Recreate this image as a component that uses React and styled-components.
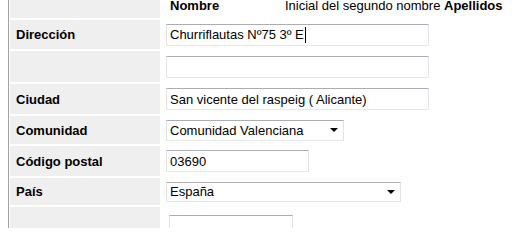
import React from "react";
import styled, { createGlobalStyle } from "styled-components";

const GlobalStyle = createGlobalStyle`
  html, body {
    margin: 0;
    padding: 0;
    background: #ffffff;
  }
  body {
    font-family: "Liberation Sans", Arial, sans-serif;
    font-size: 13px;
    color: #000;
  }
`;

const Page = styled.div`
  margin-left: 8px;
  border-left: 1px solid #a0a0a0;
  padding-left: 1px;
  height: 228px;
  overflow: hidden;
`;

const Form = styled.div`
  display: grid;
  grid-template-columns: 150px 1fr;
  column-gap: 2px;
  row-gap: 2px;
`;

const Label = styled.div`
  background: #efefef;
  height: ${(p) => p.$h}px;
  display: flex;
  align-items: center;
  padding-left: 6px;
  font-weight: bold;
`;

const Value = styled.div`
  height: ${(p) => p.$h}px;
  display: flex;
  align-items: ${(p) => (p.$top ? "flex-start" : "center")};
  padding-left: 4px;
  padding-top: ${(p) => p.$pt || 0}px;
  box-sizing: border-box;
`;

const HeaderCell = styled.div`
  height: 18px;
  display: flex;
  align-items: flex-end;
  padding-left: 8px;
  padding-bottom: 6px;
  box-sizing: border-box;
  line-height: 13px;
  white-space: nowrap;
`;

const HeaderCol = styled.span`
  display: inline-block;
  width: ${(p) => (p.$w ? `${p.$w}px` : "auto")};
  font-weight: ${(p) => (p.$bold ? "bold" : "normal")};
`;

const Field = styled.div`
  position: relative;
  box-sizing: border-box;
  width: ${(p) => p.$w}px;
  height: ${(p) => p.$h || 22}px;
  margin-left: ${(p) => p.$ml || 0}px;
  border: 1px solid;
  border-color: #abadb3 #e2e3ea #e3e9ef #e2e3ea;
  background: #fff;
  padding-left: 3px;
  display: flex;
  align-items: center;
  white-space: nowrap;
  overflow: hidden;
`;

const Caret = styled.span`
  display: inline-block;
  width: 1px;
  height: 16px;
  background: #000;
  margin-left: 1px;
`;

const Arrow = styled.span`
  position: absolute;
  right: 5px;
  top: 50%;
  margin-top: -2px;
  width: 0;
  height: 0;
  border-left: 4px solid transparent;
  border-right: 4px solid transparent;
  border-top: 4px solid #000;
`;

const Select = ({ w, h, children }) => (
  <Field $w={w} $h={h}>
    {children}
    <Arrow />
  </Field>
);

export default function App() {
  return (
    <>
      <GlobalStyle />
      <Page>
        <Form>
          <Label $h={18} />
          <HeaderCell>
            <HeaderCol $w={115} $bold>Nombre</HeaderCol>
            <HeaderCol>Inicial del segundo nombre&nbsp;</HeaderCol>
            <HeaderCol $bold>Apellidos</HeaderCol>
          </HeaderCell>

          <Label $h={29}>Dirección</Label>
          <Value $h={29}>
            <Field $w={263}>
              Churriflautas Nº75 3º E<Caret />
            </Field>
          </Value>

          <Label $h={31} />
          <Value $h={31}>
            <Field $w={263} />
          </Value>

          <Label $h={30}>Ciudad</Label>
          <Value $h={30}>
            <Field $w={263}>San vicente del raspeig ( Alicante)</Field>
          </Value>

          <Label $h={28}>Comunidad</Label>
          <Value $h={28}>
            <Select w={178} h={21}>Comunidad Valenciana</Select>
          </Value>

          <Label $h={30}>Código postal</Label>
          <Value $h={30}>
            <Field $w={143}>03690</Field>
          </Value>

          <Label $h={27}>País</Label>
          <Value $h={27}>
            <Select w={235} h={20}>España</Select>
          </Value>

          <Label $h={30} />
          <Value $h={30} $top $pt={8}>
            <Field $w={124} $ml={3} />
          </Value>
        </Form>
      </Page>
    </>
  );
}
